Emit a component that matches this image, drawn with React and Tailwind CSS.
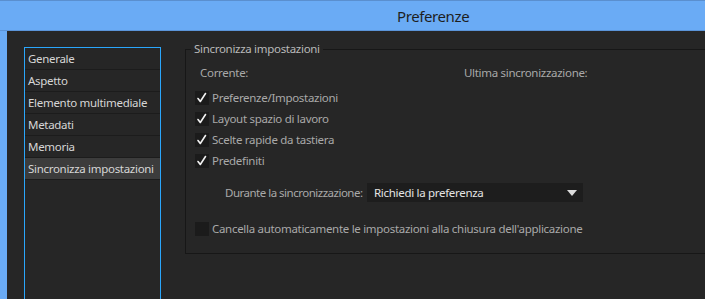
import React from 'react';

const NAV_ITEMS = [
  'Generale',
  'Aspetto',
  'Elemento multimediale',
  'Metadati',
  'Memoria',
  'Sincronizza impostazioni',
];

const SYNC_ITEMS = [
  'Preferenze/Impostazioni',
  'Layout spazio di lavoro',
  'Scelte rapide da tastiera',
  'Predefiniti',
];

function CheckBox({ checked }) {
  return (
    <div className="w-[14px] h-[14px] bg-[#1b1b1b] flex items-center justify-center shrink-0">
      {checked && (
        <svg width="14" height="14" viewBox="0 0 14 14">
          <path d="M3 7.5 L5.3 10.5 L10.5 2.5" fill="none" stroke="#f2f2f2" strokeWidth="1.6" strokeLinecap="round" strokeLinejoin="round" />
        </svg>
      )}
    </div>
  );
}

function CheckRow({ label, checked }) {
  return (
    <div className="h-[21px] flex items-center pl-[9px]">
      <CheckBox checked={checked} />
      <span className="ml-[3px] text-[#a9a9a9] whitespace-nowrap">{label}</span>
    </div>
  );
}

export default function App() {
  return (
    <div
      className="w-[705px] h-[299px] overflow-hidden flex flex-col bg-[#6aabf5] text-[11.5px] leading-[16px] tracking-[-0.3px]"
      style={{ fontFamily: '"Noto Sans", "Open Sans", sans-serif' }}
    >
      {/* title bar */}
      <div className="h-[31px] shrink-0 border-t border-[#5a8fcf] border-b border-b-[#5b94d8] flex items-center pl-[397px]">
        <span className="text-[15px] tracking-[-0.4px] text-[#1e1e1e]">Preferenze</span>
      </div>

      <div className="flex flex-1 min-h-0">
        <div className="w-[7px] shrink-0" />
        <div className="flex-1 bg-[#262626] flex pl-[17px] pt-[16px] overflow-hidden">
          {/* category list */}
          <div className="w-[137px] shrink-0 border border-[#2aa6fb] h-[300px]">
            {NAV_ITEMS.map((item, i) => (
              <div
                key={item}
                className={`h-[22px] border-b border-[#1c1c1c] flex items-center pl-[3px] text-[#d6d6d6] whitespace-nowrap ${
                  i === NAV_ITEMS.length - 1 ? 'bg-[#3c3c3c]' : ''
                }`}
              >
                {item}
              </div>
            ))}
          </div>

          {/* sync settings group */}
          <fieldset className="ml-[24px] w-[560px] shrink-0 self-start border border-[#171717] mt-[-6px] pb-[14px]">
            <legend className="ml-[5px] px-[3px] text-[#b9b9b9] leading-[16px]">Sincronizza impostazioni</legend>

            <div className="mt-[8px] flex pl-[14px] text-[#a9a9a9]">
              <span className="w-[264px]">Corrente:</span>
              <span>Ultima sincronizzazione:</span>
            </div>

            <div className="mt-[6px]">
              {SYNC_ITEMS.map((item) => (
                <CheckRow key={item} label={item} checked />
              ))}
            </div>

            <div className="mt-[12px] flex items-center pl-[39px]">
              <span className="text-[#a9a9a9] w-[142px] shrink-0 whitespace-nowrap tracking-[-0.5px]">Durante la sincronizzazione:</span>
              <div className="w-[216px] h-[19px] bg-[#1d1d1d] flex items-center justify-between pl-[7px] pr-[6px]">
                <span className="text-[#e4e4e4]">Richiedi la preferenza</span>
                <svg width="10" height="6" viewBox="0 0 10 6">
                  <path d="M0 0 H10 L5 6 Z" fill="#dcdcdc" />
                </svg>
              </div>
            </div>

            <div className="mt-[16px]">
              <CheckRow label="Cancella automaticamente le impostazioni alla chiusura dell'applicazione" checked={false} />
            </div>
          </fieldset>
        </div>
      </div>
    </div>
  );
}
